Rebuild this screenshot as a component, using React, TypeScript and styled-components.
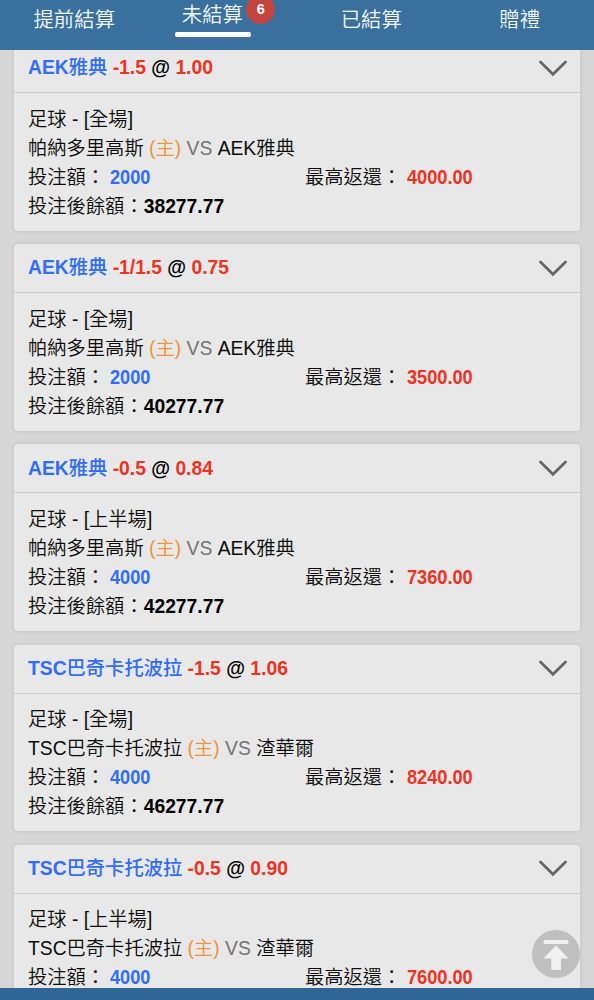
import React from "react";
import styled, { createGlobalStyle } from "styled-components";

const GlobalStyle = createGlobalStyle`
  * { box-sizing: border-box; }
  body {
    margin: 0;
    background: #d6d6d6;
    font-family: "Liberation Sans", "Noto Sans CJK TC", sans-serif;
  }
`;

const Screen = styled.div`
  position: relative;
  display: flex;
  flex-direction: column;
  width: 594px;
  height: 1000px;
  overflow: hidden;
  background: #d6d6d6;
`;

const TabBar = styled.nav`
  display: grid;
  grid-template-columns: repeat(4, 1fr);
  flex: none;
  height: 50px;
  background: #3a709d;
`;

const Tab = styled.div<{ $active?: boolean }>`
  display: flex;
  justify-content: center;
  align-items: flex-start;
  padding-top: ${(p) => (p.$active ? 1 : 6)}px;
  color: #f4f8fb;
  font-size: 20.4px;
  font-weight: 350;
  line-height: 29px;
  white-space: nowrap;
`;

const ActiveLabel = styled.div`
  position: relative;
  width: 76px;
  height: 32px;
  padding-left: 7px;
  margin-right: 20px;

  &::after {
    content: "";
    display: block;
    width: 76px;
    height: 4.5px;
    margin: 2px 0 0 -7px;
    border-radius: 2px;
    background: #fff;
  }
`;

const Badge = styled.span`
  position: absolute;
  top: -6px;
  left: 71.5px;
  width: 29px;
  height: 29px;
  border-radius: 50%;
  background: #c2453f;
  color: #fff;
  font-size: 14.5px;
  font-weight: 700;
  line-height: 28px;
  text-align: center;
`;

const List = styled.main`
  flex: 1;
  min-height: 0;
  overflow: hidden;
  padding: 0 14px;
`;

const Stack = styled.div`
  display: flex;
  flex-direction: column;
  gap: 13.7px;
  margin-top: -6px;
`;

const Card = styled.article`
  flex: none;
  height: 186.5px;
  border-radius: 4px;
  background: #e8e8e8;
  box-shadow: 0 0 4px rgba(0, 0, 0, 0.1);
`;

const CardHead = styled.header`
  display: flex;
  align-items: center;
  justify-content: space-between;
  height: 49px;
  padding: 0 13px 0 14px;
  border-bottom: 1.5px solid #cbcbcb;
`;

const Title = styled.div`
  padding-bottom: 0.4px;
  color: #000;
  font-size: 19.3px;
  font-weight: 700;
  line-height: 29px;
  white-space: pre;
`;

const Team = styled.span`
  color: #316df6;
`;

const TeamName = styled.span`
  font-weight: 500;
`;

const Odds = styled.span`
  color: #ec3323;
`;

const CardBody = styled.div`
  padding: 11.6px 14px 0;
`;

const Line = styled.div`
  height: 29px;
  color: #0c0c0c;
  font-size: 19.3px;
  font-weight: 350;
  font-kerning: none;
  line-height: 29px;
  white-space: pre;
`;

const Home = styled.span`
  color: #f19237;
`;

const Versus = styled.span`
  color: #757575;
`;

const Columns = styled(Line)`
  display: grid;
  grid-template-columns: 277px 1fr;
`;

const Amount = styled.b<{ $color: string; $narrow?: boolean }>`
  display: inline-block;
  color: ${(p) => p.$color};
  font-weight: 700;
  transform: ${(p) => (p.$narrow ? "scaleX(0.943)" : "none")};
  transform-origin: left center;
`;

const TopButton = styled.button`
  position: absolute;
  left: 532px;
  top: 930px;
  width: 48px;
  height: 48px;
  padding: 0;
  border: 0;
  border-radius: 50%;
  background: #bfbfbf;

  svg { display: block; }
`;

const Footer = styled.footer`
  flex: none;
  height: 12.5px;
  background: #306696;
`;

type Bet = {
  latin: string;
  cjk: string;
  handicap: string;
  odds: string;
  period: string;
  home: string;
  away: string;
  stake: string;
  payout: string;
  balance?: string;
};

const bets: Bet[] = [
  { latin: "AEK", cjk: "雅典", handicap: "-1.5", odds: "1.00", period: "全場", home: "帕納多里高斯", away: "AEK雅典", stake: "2000", payout: "4000.00", balance: "38277.77" },
  { latin: "AEK", cjk: "雅典", handicap: "-1/1.5", odds: "0.75", period: "全場", home: "帕納多里高斯", away: "AEK雅典", stake: "2000", payout: "3500.00", balance: "40277.77" },
  { latin: "AEK", cjk: "雅典", handicap: "-0.5", odds: "0.84", period: "上半場", home: "帕納多里高斯", away: "AEK雅典", stake: "4000", payout: "7360.00", balance: "42277.77" },
  { latin: "TSC", cjk: "巴奇卡托波拉", handicap: "-1.5", odds: "1.06", period: "全場", home: "TSC巴奇卡托波拉", away: "渣華爾", stake: "4000", payout: "8240.00", balance: "46277.77" },
  { latin: "TSC", cjk: "巴奇卡托波拉", handicap: "-0.5", odds: "0.90", period: "上半場", home: "TSC巴奇卡托波拉", away: "渣華爾", stake: "4000", payout: "7600.00" },
];

const Chevron = () => (
  <svg width="28" height="17" viewBox="0 0 28 17" fill="none">
    <path d="M1.500 2 14 14.200 26.500 2" stroke="#666" strokeWidth="2.8" strokeLinecap="round" />
  </svg>
);

function BetCard({ bet }: { bet: Bet }) {
  return (
    <Card>
      <CardHead>
        <Title>
          <Team>{bet.latin}<TeamName>{bet.cjk}</TeamName></Team> <Odds>{bet.handicap}</Odds> @ <Odds>{bet.odds}</Odds>
        </Title>
        <Chevron />
      </CardHead>
      <CardBody>
        <Line>足球 - [{bet.period}]</Line>
        <Line>
          {bet.home} <Home>(主)</Home> <Versus>VS</Versus> {bet.away}
        </Line>
        <Columns>
          <span>投注額： <Amount $narrow $color="#316df6">{bet.stake}</Amount></span>
          <span>最高返還： <Amount $narrow $color="#ec3323">{bet.payout}</Amount></span>
        </Columns>
        {bet.balance && (
          <Line>投注後餘額：<Amount $color="#000">{bet.balance}</Amount></Line>
        )}
      </CardBody>
    </Card>
  );
}

export default function App() {
  return (
    <Screen>
      <GlobalStyle />
      <TabBar>
        <Tab>提前結算</Tab>
        <Tab $active>
          <ActiveLabel>未結算<Badge>6</Badge></ActiveLabel>
        </Tab>
        <Tab>已結算</Tab>
        <Tab>贈禮</Tab>
      </TabBar>
      <List>
        <Stack>
          {bets.map((bet, i) => <BetCard key={i} bet={bet} />)}
        </Stack>
      </List>
      <Footer />
      <TopButton aria-label="Top">
        <svg width="48" height="48" viewBox="0 0 48 48" fill="#f0f0f0">
          <rect x="11.5" y="10" width="25" height="4" rx="1.5" />
          <path d="M24 15.500 36.500 28.500H29V40H19.300V28.500H11.500Z" />
        </svg>
      </TopButton>
    </Screen>
  );
}
